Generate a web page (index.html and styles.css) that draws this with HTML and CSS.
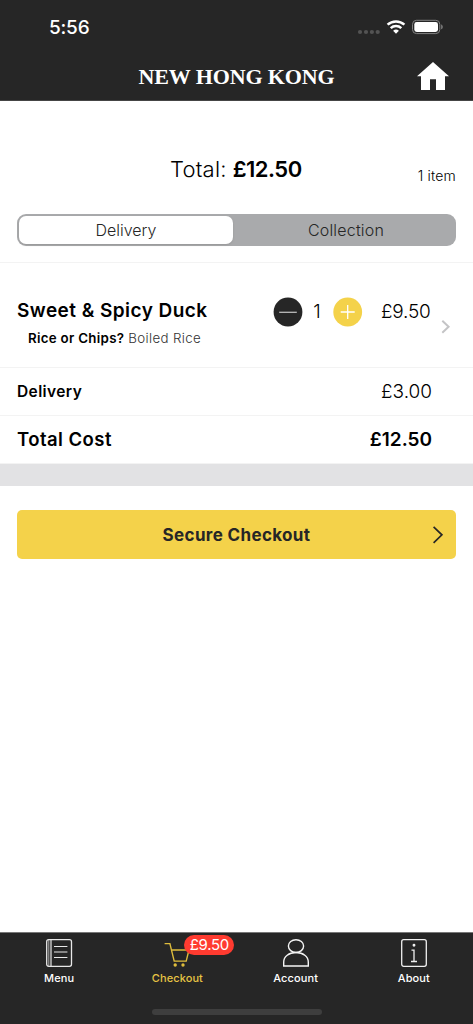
FILE: index.html
```html
<!DOCTYPE html>
<html lang="en">
<head>
<meta charset="utf-8">
<meta name="viewport" content="width=device-width, initial-scale=1">
<title>New Hong Kong – Checkout</title>
<link rel="stylesheet" href="styles.css">
</head>
<body>
<div class="app">
  <header class="header">
    <div class="status">
      <span class="time">5:56</span>
      <svg class="status-icons" width="90" height="18" viewBox="0 0 90 18">
        <g fill="#535353"><circle cx="7" cy="14" r="2.1"/><circle cx="13" cy="14" r="2.1"/><circle cx="18.9" cy="14" r="2.1"/><circle cx="24.7" cy="14" r="2.1"/></g>
        <g fill="none" stroke="#fff" stroke-width="2.5"><path d="M34.6 6.7a12.3 12.3 0 0 1 16.8 0"/><path d="M37.7 10.1a7.8 7.8 0 0 1 10.6 0"/></g>
        <path d="M43 15.8l-2.9-3a4.2 4.2 0 0 1 5.8 0z" fill="#fff"/>
        <rect x="59.5" y="2.3" width="27.3" height="13.3" rx="4" fill="none" stroke="#838383"/>
        <rect x="61.3" y="4" width="23.7" height="9.9" rx="2.4" fill="#fff"/>
        <path d="M88.2 6.6c2 .6 2 4 0 4.6z" fill="#838383"/>
      </svg>
    </div>
    <div class="titlebar">
      <h1 class="title">NEW HONG KONG</h1>
      <svg class="home" width="32" height="29" viewBox="0 0 32 29"><path d="M16 0L32 14.3h-4V28h-9V17.3h-6V28H4V14.3H0z" fill="#fff"/></svg>
    </div>
  </header>

  <main class="main">
    <section class="summary">
      <p class="total"><span class="total-label">Total:</span><b class="total-value">£12.50</b></p>
      <span class="count">1 item</span>
    </section>
    <div class="segments">
      <span class="segment selected">Delivery</span>
      <span class="segment collection">Collection</span>
    </div>

    <section class="item">
      <div class="item-info">
        <h2 class="item-name">Sweet &amp; Spicy Duck</h2>
        <p class="option"><b class="option-name">Rice or Chips?</b><span class="option-value">Boiled Rice</span></p>
      </div>
      <div class="quantity">
        <svg width="30" height="30" viewBox="0 0 30 30"><circle cx="15" cy="15" r="14.4" fill="#262626"/><path d="M6.2 15.3h17.6" stroke="#bbb" stroke-width="1.3"/></svg>
        <span class="qty">1</span>
        <svg width="30" height="30" viewBox="0 0 30 30"><circle cx="14.7" cy="15" r="14.4" fill="#f4d24a"/><path d="M7.7 15h14M14.7 8v14" stroke="#fff" stroke-width="1.3"/></svg>
      </div>
      <span class="price item-price">£9.50</span>
      <svg class="disclosure" width="10" height="16" viewBox="0 0 10 16"><path d="M1.3 1.8l6.3 6-6.3 6" fill="none" stroke="#c4c4c6" stroke-width="2"/></svg>
    </section>
    <section class="row"><span class="delivery-label">Delivery</span><span class="price">£3.00</span></section>
    <section class="row"><span class="cost-label">Total Cost</span><span class="cost-value">£12.50</span></section>
    <div class="divider"></div>
    <div class="checkout">
      <span class="checkout-label">Secure Checkout</span>
      <svg class="checkout-arrow" width="12" height="20" viewBox="0 0 12 20"><path d="M1.6 1.8l8.3 8-8.3 8" fill="none" stroke="#262626" stroke-width="1.7"/></svg>
    </div>
  </main>

  <nav class="tabs">
    <div class="tab">
      <svg width="30" height="30" viewBox="0 0 30 30" fill="none" stroke="#e8e8e8"><rect x="2.7" y="1.7" width="24.8" height="26.6" rx="2" stroke-width="1.3"/><path d="M4.8 2v26" stroke-width=".7"/><path d="M7 2v26M10 8.5h13.4M10 14h13.4M10 19.5h13.4" stroke-width="1.2"/></svg>
      <span class="tab-label">Menu</span>
    </div>
    <div class="tab active">
      <div class="icon-wrap">
        <svg width="30" height="30" viewBox="0 0 30 30" fill="none" stroke="#dfbd3d" stroke-width="1.4"><path d="M2.6 5.6h5.3l4.3 17.5h12L27.7 9v3H9.8"/><circle cx="13.2" cy="27" r="1" fill="#f4d24a"/><circle cx="21" cy="27" r="1" fill="#f4d24a"/></svg>
        <span class="badge">£9.50</span>
      </div>
      <span class="tab-label">Checkout</span>
    </div>
    <div class="tab">
      <svg width="30" height="30" viewBox="0 0 30 30" fill="none" stroke="#f5f5f5" stroke-width="1.4"><ellipse cx="15" cy="8.1" rx="7.6" ry="6.4"/><path d="M2.7 28v-4c0-5.4 5.2-9.5 12.3-9.5s12.3 4.1 12.3 9.5v4z"/></svg>
      <span class="tab-label">Account</span>
    </div>
    <div class="tab">
      <svg width="30" height="30" viewBox="0 0 30 30" fill="none" stroke="#f0f0f0" stroke-width="1.3"><rect x="2.7" y="1.7" width="24.6" height="26.6" rx="2"/><path d="M12.5 12.2H15v11.3M12 23.5h6"/><circle cx="15" cy="7.2" r=".8" fill="#f0f0f0"/></svg>
      <span class="tab-label">About</span>
    </div>
    <div class="home-indicator"></div>
  </nav>
</div>
</body>
</html>
```

FILE: styles.css
```css
* { box-sizing: border-box; }
body { margin: 0; background: #fff; font-family: Inter, "Liberation Sans", sans-serif; color: #000; }
h1, h2, p { margin: 0; }
svg { display: block; flex-shrink: 0; }
span, b, h1, h2 { white-space: nowrap; }
.app { width: 473px; height: 1024px; display: flex; flex-direction: column; overflow: hidden; }

.header { height: 101px; flex-shrink: 0; background: #262626; border-bottom: 1px solid #454545; color: #fff; }
.status { height: 53px; padding: 18px 30px 0 49px; display: flex; justify-content: space-between; }
.time { font-size: 19px; font-weight: 500; line-height: 19px; letter-spacing: -0.2px; }
.titlebar { height: 47px; display: grid; grid-template-columns: 1fr auto 1fr; align-items: center; }
.title { grid-column: 2; font: bold 22px/24px "Liberation Serif", serif; letter-spacing: -0.12px; }
.home { justify-self: end; margin-right: 24px; }

.main { flex: 1; }
.summary { height: 113px; padding: 54px 17px 0 170px; display: flex; justify-content: space-between; line-height: 28px; }
.total { display: flex; gap: 6px; font-size: 22px; }
.total-label { font-weight: 300; letter-spacing: 0.2px; }
.total-value { font-weight: 600; letter-spacing: -0.5px; }
.count { padding-top: 7px; font-size: 14px; font-weight: 300; letter-spacing: 0.2px; }
.segments { height: 32px; margin: 0 17px; padding: 2px; border-radius: 9px; background: #a9aaac; display: flex; color: #262626; font-size: 16px; font-weight: 300; }
.segment { flex: 1; display: flex; align-items: center; justify-content: center; }
.selected { flex: 0 0 214px; background: #fff; border-radius: 7px; box-shadow: 0 1px 2px #8888; }
.collection { padding-left: 5px; letter-spacing: 0.2px; }

.item { height: 106px; margin-top: 16px; padding: 33px 22px 0 17px; border-top: 1px solid #f3f3f3; border-bottom: 1px solid #f3f3f3; display: flex; align-items: flex-start; }
.item-info { width: 256px; }
.item-name { font-size: 19px; font-weight: 600; line-height: 30px; letter-spacing: 0.45px; }
.option { padding-left: 11px; margin-top: 2px; display: flex; gap: 4px; font-size: 13.3px; line-height: 20px; }
.option-name { font-weight: 600; letter-spacing: 0.3px; }
.option-value { font-weight: 300; color: #333; letter-spacing: 0.35px; }
.quantity { width: 90px; display: flex; align-items: center; justify-content: space-between; }
.qty { font-size: 19px; font-weight: 300; line-height: 30px; padding: 1px 2px 0 0; }
.price { font-size: 19px; font-weight: 300; line-height: 30px; }
.item-price { margin: 1px 0 0 18px; letter-spacing: -0.2px; }
.disclosure { margin: 23px 0 0 auto; }
.row { height: 48px; padding: 0 41px 0 17px; border-bottom: 1px solid #f3f3f3; display: flex; align-items: center; justify-content: space-between; }
.delivery-label { font-size: 15.5px; font-weight: 600; letter-spacing: 0.4px; }
.cost-label { font-size: 18.5px; font-weight: 600; line-height: 22px; padding-bottom: 1px; letter-spacing: 0.45px; }
.cost-value { font-size: 19px; font-weight: 600; }
.divider { height: 22px; background: #e2e2e4; }
.checkout { height: 49px; margin: 24px 17px 0; padding: 0 12px; border-radius: 5px; background: #f4d24a; display: grid; grid-template-columns: 1fr auto 1fr; align-items: center; color: #262626; }
.checkout-label { grid-column: 2; font-size: 17px; font-weight: 700; letter-spacing: 0.35px; }
.checkout-arrow { justify-self: end; }

.tabs { height: 92px; padding-top: 5px; background: #262626; border-top: 1px solid #777; display: grid; grid-template-columns: repeat(4, 1fr); grid-template-rows: 71px 5px; color: #fff; }
.tab { display: flex; flex-direction: column; align-items: center; }
.tab-label { margin-top: 3px; font-size: 11px; font-weight: 500; line-height: 14px; letter-spacing: 0.1px; }
.active { color: #e6c444; }
.icon-wrap { position: relative; }
.badge { position: absolute; left: 22px; top: -3px; width: 50px; height: 20px; border-radius: 10px; background: #ff3b30; color: #fff; font-size: 15px; line-height: 20px; text-align: center; letter-spacing: -0.3px; }
.home-indicator { grid-column: 1 / -1; justify-self: center; width: 170px; height: 6px; border-radius: 3px; background: #3e3e3e; }
```
